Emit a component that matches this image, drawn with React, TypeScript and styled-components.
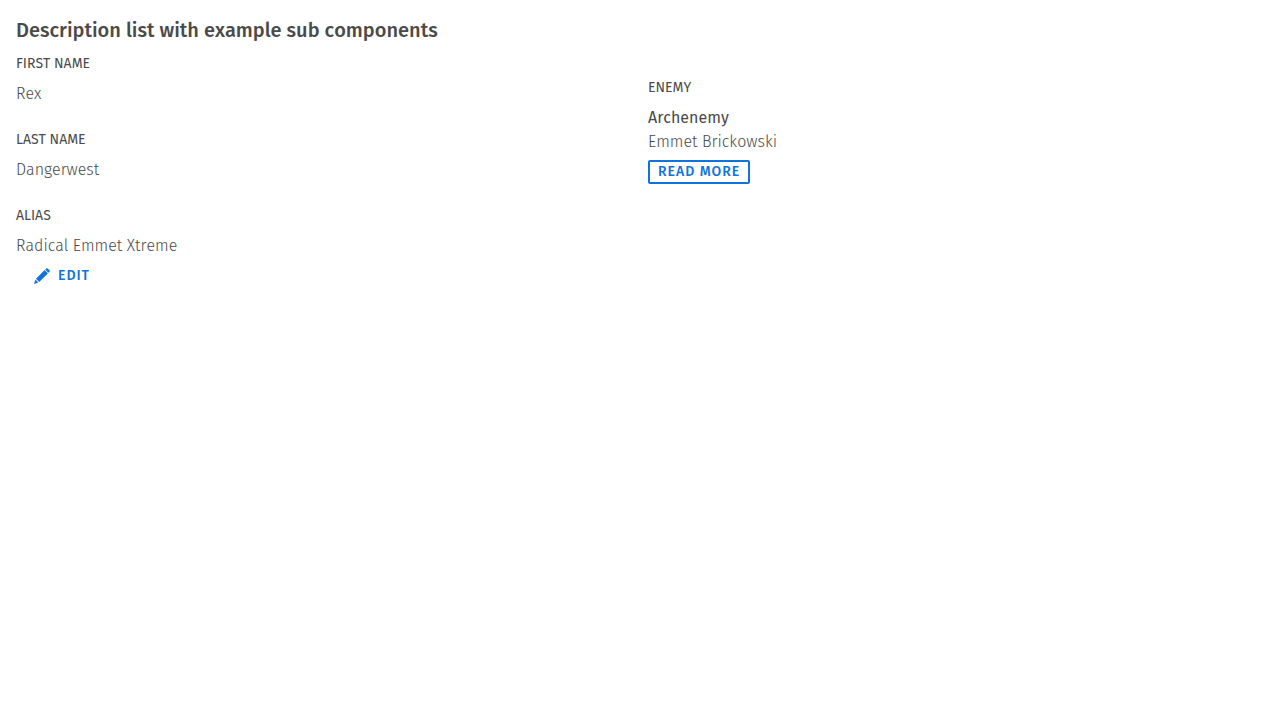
import React from "react";
import styled, { createGlobalStyle } from "styled-components";

const GlobalStyle = createGlobalStyle`
  *, *::before, *::after { box-sizing: border-box; }
  body {
    margin: 0;
    background: #fff;
    color: #4a4a4a;
    font-family: "Fira Sans", "Open Sans", sans-serif;
    font-size: 16px;
    line-height: 24px;
    font-kerning: none;
  }
`;

const Page = styled.main`
  padding: 16px;
`;

const Title = styled.h3`
  margin: 0 0 8px;
  font-size: 20px;
  line-height: 28px;
  font-weight: 500;
`;

const Columns = styled.div`
  display: grid;
  grid-template-columns: 1fr 1fr;
  column-gap: 16px;
  align-items: start;
`;

const DescriptionList = styled.dl<{ $inset?: boolean }>`
  display: flex;
  flex-direction: column;
  gap: 22px;
  margin: 0;
  padding-top: ${(p) => (p.$inset ? 24 : 0)}px;
`;

const Entry = styled.div`
  display: flex;
  flex-direction: column;
  gap: 6px;
`;

const Term = styled.dt`
  font-size: 14px;
  line-height: 24px;
  font-weight: 400;
  text-transform: uppercase;
`;

const Details = styled.dd`
  display: flex;
  flex-direction: column;
  align-items: flex-start;
  margin: 0;
  font-weight: 300;
`;

const Subtitle = styled.span`
  font-weight: 400;
`;

const Button = styled.button<{ $variant: "outline" | "text" }>`
  display: inline-flex;
  align-items: center;
  gap: 8px;
  height: 24px;
  margin: 6px 0 0;
  padding: 0 ${(p) => (p.$variant === "outline" ? 8 : 16)}px;
  border: 2px solid ${(p) => (p.$variant === "outline" ? "#0f73de" : "transparent")};
  border-radius: 2px;
  background: transparent;
  color: #0f73de;
  font-family: inherit;
  font-size: 14px;
  line-height: 20px;
  font-weight: 500;
  letter-spacing: 1px;
  text-transform: uppercase;
  cursor: pointer;
`;

const PencilIcon = () => (
  <svg width="16" height="16" viewBox="0 0 16 16" fill="currentColor" aria-hidden="true">
    <path d="M11.2 1.6 12.3.5Q13-.2 13.7.5L15.5 2.3Q16.2 3 15.5 3.7L14.4 4.8Z" />
    <path d="M10.6 2.1 13.9 5.4 5.2 14 2 10.8Z" />
    <path d="M1.4 11.6 4.4 14.6 0 16Z" />
  </svg>
);

export default function App() {
  return (
    <>
      <GlobalStyle />
      <Page>
        <Title>Description list with example sub components</Title>
        <Columns>
          <DescriptionList>
            <Entry>
              <Term>First name</Term>
              <Details>Rex</Details>
            </Entry>
            <Entry>
              <Term>Last name</Term>
              <Details>Dangerwest</Details>
            </Entry>
            <Entry>
              <Term>Alias</Term>
              <Details>
                Radical Emmet Xtreme
                <Button type="button" $variant="text">
                  <PencilIcon />
                  Edit
                </Button>
              </Details>
            </Entry>
          </DescriptionList>
          <DescriptionList $inset>
            <Entry>
              <Term>Enemy</Term>
              <Details>
                <Subtitle>Archenemy</Subtitle>
                <span>Emmet Brickowski</span>
                <Button type="button" $variant="outline">
                  Read more
                </Button>
              </Details>
            </Entry>
          </DescriptionList>
        </Columns>
      </Page>
    </>
  );
}
